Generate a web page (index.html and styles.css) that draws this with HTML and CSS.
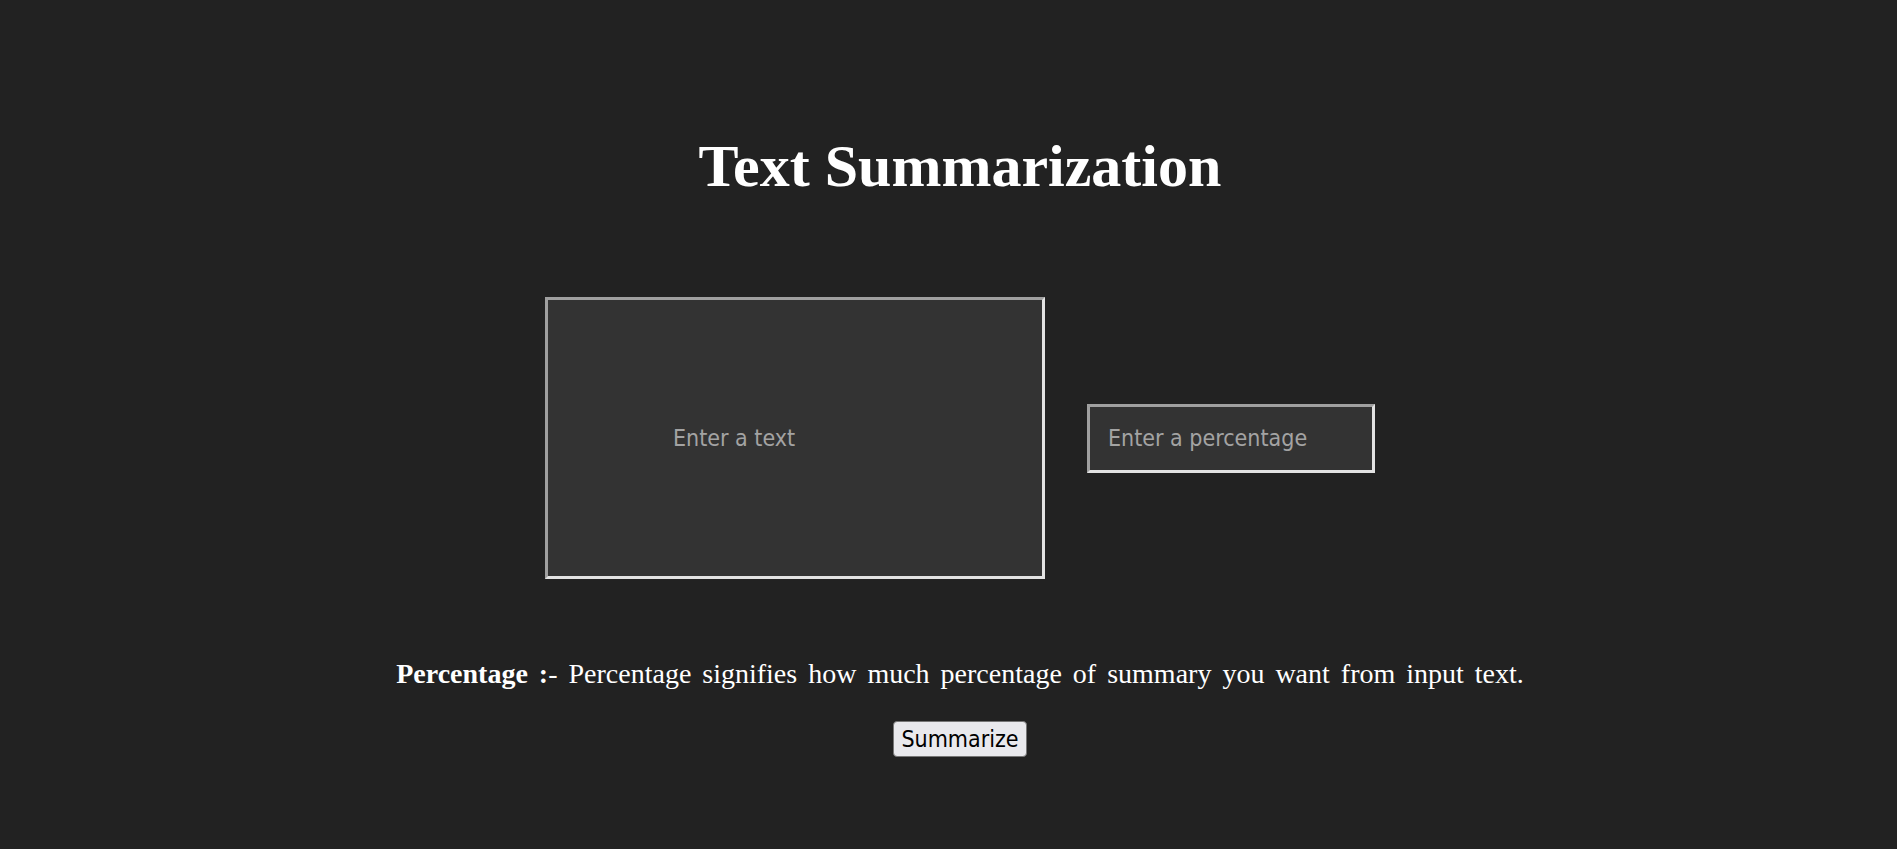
FILE: index.html
```html
<!DOCTYPE html>
<html lang="en">
<head>
<meta charset="utf-8">
<title>Text Summarization</title>
<link rel="stylesheet" href="styles.css">
</head>
<body>
<main class="page">
  <h1 class="title">Text Summarization</h1>
  <form class="form">
    <div class="fields">
      <textarea class="text-input" placeholder="Enter a text"></textarea>
      <input class="pct-input" type="text" placeholder="Enter a percentage">
    </div>
    <p class="note"><b class="note-label">Percentage :</b>- Percentage signifies how much percentage of summary you want from input text.</p>
    <button class="submit" type="button">Summarize</button>
  </form>
</main>
</body>
</html>
```
FILE: styles.css
```css
html, body {
  margin: 0;
  padding: 0;
  background: #222222;
  color: #ffffff;
}
.page {
  display: flex;
  flex-direction: column;
  align-items: center;
  padding-top: 131px;
  padding-left: 23px;
}
.title {
  margin: 0;
  font-family: "Liberation Serif", serif;
  font-weight: bold;
  font-size: 60px;
  line-height: 70px;
}
.form {
  display: flex;
  flex-direction: column;
  align-items: center;
  margin-top: 96px;
}
.fields {
  display: flex;
  align-items: center;
  gap: 42px;
}
.text-input,
.pct-input {
  box-sizing: border-box;
  background: #333333;
  color: #ffffff;
  border: 3px solid;
  border-color: #a0a0a0 #e3e3e3 #e3e3e3 #a0a0a0;
  font-family: "DejaVu Sans Condensed", "DejaVu Sans", sans-serif;
  font-stretch: condensed;
  font-size: 23px;
  outline: none;
}
.text-input {
  width: 500px;
  height: 282px;
  padding: 124px 20px 0 125px;
  line-height: 28px;
  resize: none;
}
.pct-input {
  width: 288px;
  height: 69px;
  padding: 0 18px;
}
.text-input::placeholder,
.pct-input::placeholder {
  color: #a3a3a3;
  opacity: 1;
}
.note {
  margin: 79px 0 0 0;
  font-family: "Liberation Serif", serif;
  font-size: 28px;
  word-spacing: 4px;
}
.submit {
  margin-top: 31px;
  box-sizing: border-box;
  width: 134px;
  height: 36px;
  padding: 0;
  background: #e9e9ed;
  color: #000000;
  border: 1px solid #767676;
  border-radius: 4px;
  font-family: "DejaVu Sans Condensed", "DejaVu Sans", sans-serif;
  font-stretch: condensed;
  font-size: 23px;
}
```
